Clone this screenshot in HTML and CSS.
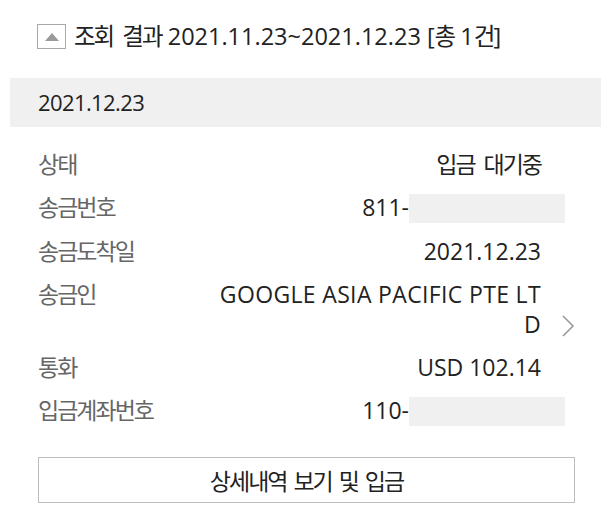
FILE: index.html
```html
<!DOCTYPE html>
<html lang="ko">
<head>
<meta charset="utf-8">
<link rel="stylesheet" href="styles.css">
</head>
<body>
<div class="page">
  <div class="header">
    <span class="toggle"><svg width="14" height="8" viewBox="0 0 14 8"><polygon points="7,0 14,8 0,8" fill="#9a9a9a"/></svg></span>
    <span class="title"><span class="ko">조회 결과</span> 2021.11.23~2021.12.23 [<span class="ko">총</span> 1<span class="ko">건</span>]</span>
  </div>
  <div class="band">2021.12.23</div>
  <div class="list">
    <div class="row">
      <div class="label ko">상태</div>
      <div class="value ko">입금 대기중</div>
      <div class="side"></div>
    </div>
    <div class="row">
      <div class="label ko">송금번호</div>
      <div class="value masked-value">811-<span class="mask"></span></div>
      <div class="side"></div>
    </div>
    <div class="row">
      <div class="label ko">송금도착일</div>
      <div class="value">2021.12.23</div>
      <div class="side"></div>
    </div>
    <div class="row">
      <div class="label ko">송금인</div>
      <div class="value wrap">GOOGLE ASIA PACIFIC PTE LTD</div>
      <div class="side chev"><svg width="14" height="24" viewBox="0 0 14 24"><polyline points="2,2 12,12 2,22" fill="none" stroke="#9a9a9a" stroke-width="1.6"/></svg></div>
    </div>
    <div class="row">
      <div class="label ko">통화</div>
      <div class="value">USD 102.14</div>
      <div class="side"></div>
    </div>
    <div class="row">
      <div class="label ko">입금계좌번호</div>
      <div class="value masked-value">110-<span class="mask"></span></div>
      <div class="side"></div>
    </div>
  </div>
  <div class="actions">
    <button class="btn ko">상세내역 보기 및 입금</button>
  </div>
</div>
</body>
</html>
```

FILE: styles.css
```css
* { box-sizing: border-box; }
html, body { margin: 0; padding: 0; background: #fff; }
body {
  font-family: "Open Sans", "Noto Sans CJK KR", sans-serif;
  color: #222;
  width: 610px;
  height: 523px;
  overflow: hidden;
}
.ko { letter-spacing: -2px; word-spacing: 5px; }
.page { padding-top: 23px; }
.header {
  display: flex;
  align-items: center;
  padding-left: 37px;
  height: 27px;
}
.toggle {
  width: 29px;
  height: 25px;
  border: 1px solid #a8a8a8;
  display: flex;
  align-items: center;
  justify-content: center;
  margin-right: 8px;
  background: #fff;
}
.title {
  font-size: 23.5px;
  color: #222;
  line-height: 27px;
  white-space: nowrap;
}
.band {
  margin: 28px 9px 0 10px;
  height: 49px;
  background: #f0f0f0;
  padding-left: 28px;
  font-size: 22px;
  letter-spacing: -0.6px;
  line-height: 49px;
  color: #222;
}
.list {
  padding: 15px 35px 0 38px;
}
.row {
  display: grid;
  grid-template-columns: 175px 328px 34px;
  padding: 6.5px 0;
  font-size: 23px;
  line-height: 30px;
}
.label { color: #666; }
.value {
  text-align: right;
  color: #222;
}
.wrap { word-break: break-all; letter-spacing: 0.35px; }
.masked-value { margin-right: -24px; white-space: nowrap; }
.mask {
  display: inline-block;
  width: 156px;
  height: 29px;
  background: #f0f0f0;
  vertical-align: -7px;
}
.side { display: flex; justify-content: flex-end; }
.chev { align-items: flex-end; padding-bottom: 1px; }
.actions { padding: 25px 35px 0 38px; }
.btn {
  width: 100%;
  height: 46px;
  border: 1px solid #bdbdbd;
  background: #fff;
  font-family: "Open Sans", "Noto Sans CJK KR", sans-serif;
  font-size: 23px;
  color: #222;
  padding: 0;
  word-spacing: 3px;
}
```
